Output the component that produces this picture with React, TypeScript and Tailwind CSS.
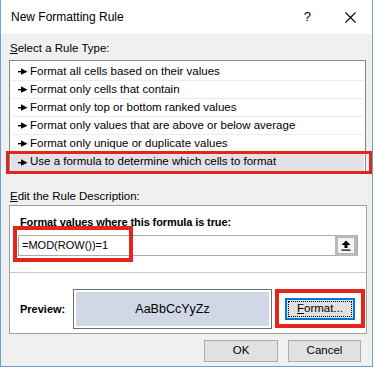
import React from "react";

const rules = [
  "Format all cells based on their values",
  "Format only cells that contain",
  "Format only top or bottom ranked values",
  "Format only values that are above or below average",
  "Format only unique or duplicate values",
  "Use a formula to determine which cells to format",
];

function RuleArrow() {
  return (
    <svg width="10" height="7" viewBox="0 0 10 7" className="shrink-0">
      <rect x="0" y="3" width="4" height="1.4" fill="#000" />
      <path d="M3 0.3 L9.5 3.7 L3 6.8 Z" fill="#000" />
    </svg>
  );
}

export default function App() {
  return (
    <div className="relative h-[369px] w-[375px] overflow-hidden bg-white font-['Liberation_Sans',Arial,sans-serif] text-[11.5px] text-black">
      <div className="flex h-[367px] w-[373px] flex-col border-x border-b border-[#6d9fd1]">
        {/* title bar */}
        <div className="flex h-[34px] shrink-0 items-center bg-white pl-[10px]">
          <span className="flex-1 text-[12px]">New Formatting Rule</span>
          <span className="mr-[34px] text-[13px]">?</span>
          <svg width="11" height="11" viewBox="0 0 11 11" className="mr-[16px]">
            <path d="M0.5 0.5 L10.5 10.5 M10.5 0.5 L0.5 10.5" stroke="#000" strokeWidth="1.1" />
          </svg>
        </div>

        <div className="relative flex flex-1 flex-col bg-[#f0f0f0]">
          <div className="mt-[6px] pl-[9px] leading-[16px]">
            <span className="underline">S</span>elect a Rule Type:
          </div>

          {/* rule list */}
          <div className="relative ml-[8px] mt-[4px] w-[357px] border border-[#828790] bg-white px-[1px] pt-[2px]">
            {rules.map((r, i) => (
              <div
                key={r}
                className={`flex h-[18px] items-center gap-[2px] pl-[7px] ${
                  i === 5 ? "bg-[#e2e2e6]" : "border-b border-[#ececec]"
                }`}
              >
                <RuleArrow />
                <span className="whitespace-nowrap leading-none">{r}</span>
              </div>
            ))}
          </div>
          {/* highlight around selected rule */}
          <div className="pointer-events-none absolute left-[5px] top-[117px] h-[23px] w-[366px] border-[3px] border-[#e3261c]" />

          <div className="mt-[16px] pl-[9px] leading-[16px]">
            <span className="underline">E</span>dit the Rule Description:
          </div>

          {/* description group */}
          <div className="relative ml-[8px] mt-[1px] flex h-[129px] w-[358px] flex-col border border-[#a0a0a0] bg-white">
            <div className="mt-[8px] pl-[10px] text-[11px] font-bold leading-[16px] tracking-[-0.1px]">
              Format values where this formula is true:
            </div>
            <div className="ml-[8px] mt-[5px] flex h-[21px] w-[340px] items-center border border-[#acacac] bg-white">
              <span className="flex-1 pl-[3px] text-[11px] leading-none">=MOD(ROW())=1</span>
              <div className="flex h-[21px] w-[22px] items-center justify-center border-[3px] border-[#b9b9b9] bg-[#f4f4f4]">
                <svg width="10" height="11" viewBox="0 0 10 11">
                  <path d="M5 0.5 L9.5 5 L6.5 5 L6.5 8 L3.5 8 L3.5 5 L0.5 5 Z" fill="#000" />
                  <rect x="0.5" y="9.5" width="9" height="1.2" fill="#000" />
                </svg>
              </div>
            </div>
            <div className="mt-[16px] h-px w-full bg-[#c8c8c8]" />
            <div className="mt-[16px] flex items-center">
              <span className="w-[63px] pl-[10px] text-[11px] font-bold">Preview:</span>
              <div className="flex h-[40px] w-[199px] border border-[#6e6e6e] bg-white p-[2px]">
                <div className="flex flex-1 items-center justify-center bg-[#d0d7e5] text-[12.5px]">AaBbCcYyZz</div>
              </div>
              <div className="ml-[13px] flex h-[22px] w-[70px] items-center justify-center border-2 border-[#0078d7] bg-[#e1e1e1]">
                <div className="flex h-[16px] w-[64px] items-center justify-center border border-dotted border-black leading-none">
                  <span className="underline">F</span>ormat...
                </div>
              </div>
            </div>
            {/* highlights */}
            <div className="pointer-events-none absolute left-[3px] top-[20px] h-[36px] w-[120px] border-[4px] border-[#e3261c]" />
            <div className="pointer-events-none absolute left-[265px] top-[83px] h-[39px] w-[90px] border-[4px] border-[#e3261c]" />
          </div>

          {/* buttons */}
          <div className="mt-[6px] flex justify-end gap-[10px] pr-[11px]">
            <div className="flex h-[22px] w-[74px] items-center justify-center border border-[#adadad] bg-[#e1e1e1]">OK</div>
            <div className="flex h-[22px] w-[73px] items-center justify-center border border-[#adadad] bg-[#e1e1e1]">Cancel</div>
          </div>
        </div>
      </div>
    </div>
  );
}
